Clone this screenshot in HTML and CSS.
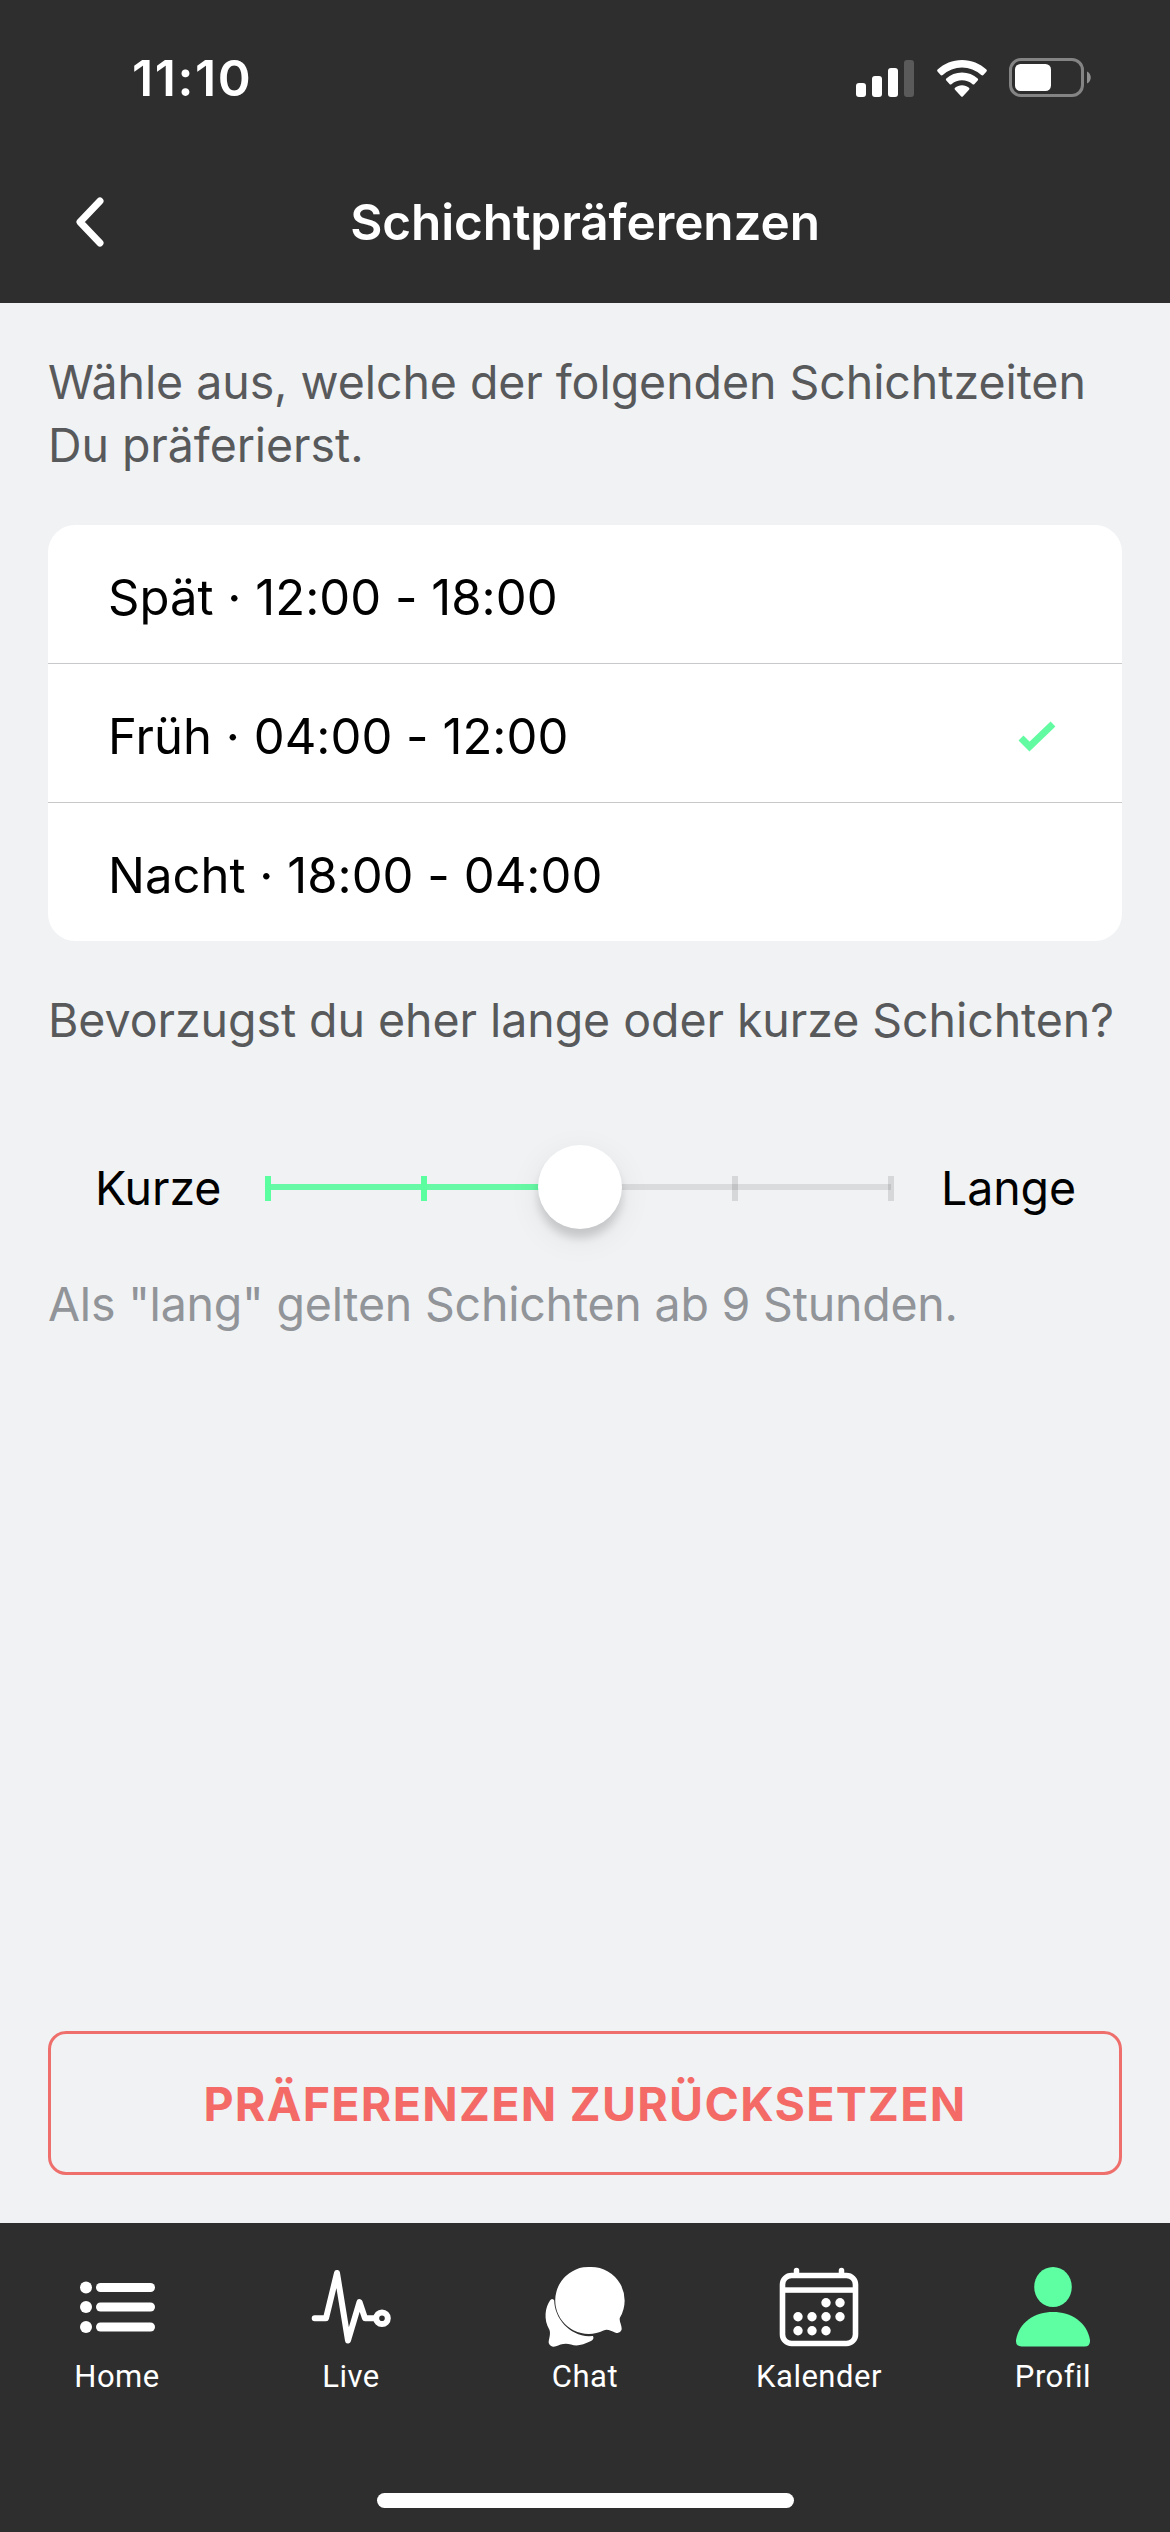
FILE: index.html
```html
<!DOCTYPE html>
<html lang="de">

<head>
     <meta charset="UTF-8">
     <meta name="viewport" content="width=device-width, initial-scale=1.0">
     <title>Schichtpräferenzen</title>
     <link rel="stylesheet" href="styles.css">
</head>

<body>
     <div class="screen">
          <div class="statusbar">
               <span class="time">11:10</span>
               <div class="status-icons">
                    <svg width="58" height="37" viewBox="0 0 58 37" fill="#fff">
                         <rect x="0" y="23" width="10" height="14" rx="3" />
                         <rect x="16" y="16" width="10" height="21" rx="3" />
                         <rect x="32" y="8" width="10" height="29" rx="3" />
                         <rect x="48" y="0" width="10" height="37" rx="3" fill="#5a5a5a" />
                    </svg>
                    <svg class="wifi" width="50" height="37" viewBox="0 0 50 37" fill="#fff">
                         <path d="M25 0C34.5 0 43 3.7 49.4 9.6Q50.4 10.6 49.5 11.6L46.6 14.8Q45.5 15.9 44.3 14.9A29 29 0 0 0 5.7 14.9Q4.5 15.9 3.4 14.8L.5 11.6Q-.4 10.6 .6 9.6C7 3.7 15.5 0 25 0Z" />
                         <path d="M25 12.5C31 12.5 36.5 14.7 40.7 18.4Q41.7 19.4 40.7 20.4L37.5 23.9Q36.5 24.9 35.3 23.9A16.5 16.5 0 0 0 14.7 23.9Q13.5 24.9 12.5 23.9L9.3 20.4Q8.3 19.4 9.3 18.4C13.5 14.7 19 12.5 25 12.5Z" />
                         <path d="M25 25.3C27.7 25.3 30 26.2 32 27.7Q33 28.7 32 29.7L26 36.2Q25 37.2 24 36.2L18 29.7Q17 28.7 18 27.7C20 26.2 22.3 25.3 25 25.3Z" />
                    </svg>
                    <svg class="battery" width="83" height="40" viewBox="0 0 83 40">
                         <rect x="1.5" y="1.5" width="72" height="36" rx="10.5" fill="none" stroke="#848484" stroke-width="3" />
                         <rect x="6" y="6" width="36" height="27" rx="5.5" fill="#fff" />
                         <path d="M78 13.5C83 15.5 83 23.5 78 25.5Z" fill="#909090" />
                    </svg>
               </div>
          </div>

          <div class="header">
               <svg class="back" width="28" height="50" viewBox="0 0 28 50">
                    <path d="M24 4L4 25L24 46" fill="none" stroke="#fff" stroke-width="7" stroke-linecap="round" stroke-linejoin="round" />
               </svg>
               <h1>Schichtpräferenzen</h1>
          </div>

          <div class="content">
               <p class="intro">Wähle aus, welche der folgenden Schichtzeiten<br>Du präferierst.</p>

               <div class="card">
                    <div class="row">Spät · 12:00 - 18:00</div>
                    <div class="row">Früh · 04:00 - 12:00
                         <svg class="check" width="36" height="30" viewBox="0 0 36 30">
                              <path d="M2 17L10.5 25.5L34 3" fill="none" stroke="#62fba2" stroke-width="7" />
                         </svg>
                    </div>
                    <div class="row">Nacht · 18:00 - 04:00</div>
               </div>

               <p class="question">Bevorzugst du eher lange oder kurze Schichten?</p>

               <div class="slider">
                    <span>Kurze</span>
                    <div class="range">
                         <i class="tick on"></i>
                         <i class="tick on"></i>
                         <i class="tick"></i>
                         <i class="tick"></i>
                         <i class="tick"></i>
                         <div class="knob"></div>
                    </div>
                    <span class="end">Lange</span>
               </div>

               <p class="note">Als "lang" gelten Schichten ab 9 Stunden.</p>

               <button class="reset">PRÄFERENZEN ZURÜCKSETZEN</button>
          </div>

          <div class="tabbar">
               <div class="tab">
                    <svg width="84" height="84" viewBox="0 0 84 84" fill="#fff">
                         <circle cx="11" cy="24.5" r="6" />
                         <circle cx="11" cy="44" r="6" />
                         <circle cx="11" cy="64" r="6" />
                         <rect x="21" y="20" width="59" height="9" rx="4.5" />
                         <rect x="21" y="39.5" width="59" height="9" rx="4.5" />
                         <rect x="21" y="59.5" width="59" height="9" rx="4.5" />
                    </svg>
                    <span>Home</span>
               </div>
               <div class="tab">
                    <svg width="84" height="84" viewBox="0 0 84 84" fill="none" stroke="#fff" stroke-width="6" stroke-linecap="round" stroke-linejoin="round">
                         <path d="M5.7 55.3H17L28 10L39 77.5L50.5 39L56 55.3H66" />
                         <circle cx="73" cy="55.3" r="5.8" />
                    </svg>
                    <span>Live</span>
               </div>
               <div class="tab">
                    <svg width="84" height="84" viewBox="0 0 84 84" fill="#fff">
                         <path d="M48 4A33.5 33.5 0 0 1 77 54.5C75.5 58 79.5 63 78.5 67Q76.5 71.5 72 69.5C68 68 64.5 65.5 60.5 67.5A33.5 33.5 0 1 1 48 4Z" />
                         <path d="M10.5 36.5L11.2 37.5C11.5 55 26 72.5 46 73.3L50 73Q51.5 76 48 78C40 82 34 83.5 28 81.5C22 79.5 17 81.5 13 83.3Q8 85 5.7 80C5.5 76 8 72 6.5 67C0 56 2.500 44 7 37.500Q8.500 35 10.500 36.500Z" />
                    </svg>
                    <span>Chat</span>
               </div>
               <div class="tab">
                    <svg width="84" height="84" viewBox="0 0 84 84" fill="#fff">
                         <path d="M19.5 7.5V12M64.5 7.5V12" stroke="#fff" stroke-width="5.5" stroke-linecap="round" />
                         <rect x="5.5" y="12.5" width="73" height="68" rx="9" fill="none" stroke="#fff" stroke-width="5.6" />
                         <rect x="5" y="24.3" width="74" height="5.5" />
                         <circle cx="49" cy="39.7" r="4.7" />
                         <circle cx="63" cy="39.7" r="4.7" />
                         <circle cx="21" cy="53.7" r="4.7" />
                         <circle cx="35" cy="53.7" r="4.7" />
                         <circle cx="49" cy="53.7" r="4.7" />
                         <circle cx="63" cy="53.7" r="4.7" />
                         <circle cx="21" cy="67.7" r="4.7" />
                         <circle cx="35" cy="67.7" r="4.7" />
                         <circle cx="49" cy="67.7" r="4.7" />
                    </svg>
                    <span>Kalender</span>
               </div>
               <div class="tab">
                    <svg width="84" height="84" viewBox="0 0 84 84" fill="#5effa3">
                         <ellipse cx="42" cy="24" rx="18.8" ry="20" />
                         <path d="M42 49C60 49 76 59 79 77Q79.5 83.5 73.5 83.5H10.5Q4.5 83.5 5 77C8 59 24 49 42 49Z" />
                    </svg>
                    <span>Profil</span>
               </div>
          </div>
          <div class="home-indicator"></div>
     </div>
</body>

</html>
```

FILE: styles.css
```css
* {
     box-sizing: border-box;
     margin: 0;
     padding: 0;
}

body {
     font-family: Inter, "Liberation Sans", sans-serif;
     background: #2e2e2e;
}

svg {
     display: block;
     flex: none;
     overflow: visible;
}

.screen {
     width: 1170px;
     height: 2532px;
     display: flex;
     flex-direction: column;
     overflow: hidden;
}

/* top */
.statusbar {
     height: 141px;
     padding: 15px 78px 0 132px;
     display: flex;
     align-items: center;
     justify-content: space-between;
     color: #fff;
}

.time {
     font-size: 50px;
     font-weight: 600;
     letter-spacing: 1.6px;
}

.status-icons {
     display: flex;
     align-items: center;
}

.wifi {
     margin-left: 23px;
}

.battery {
     margin-left: 22px;
}

.header {
     height: 162px;
     padding: 0 76px;
     display: grid;
     grid-template-columns: 28px 1fr 28px;
     align-items: center;
     color: #fff;
     text-align: center;
}

.header h1 {
     font-size: 49.5px;
     font-weight: 600;
     letter-spacing: -0.1px;
}

/* content */
.content {
     flex: 1;
     padding: 48px;
     display: flex;
     flex-direction: column;
     background: #f0f2f4;
     font-size: 46.5px;
     line-height: 63px;
}

.intro,
.question {
     color: #58595b;
     letter-spacing: -0.06px;
     white-space: nowrap;
}

.card {
     margin: 48px 0;
     border-radius: 27px;
     background: #fff;
     overflow: hidden;
}

.row {
     height: 138px;
     padding: 6px 67px 0 60px;
     display: flex;
     align-items: center;
     justify-content: space-between;
     font-size: 49px;
     letter-spacing: 0.02px;
     color: #000;
}

.row + .row {
     height: 139px;
     border-top: 1px solid #c8c9cb;
}

.slider {
     height: 84px;
     margin-top: 93px;
     padding-left: 47px;
     display: grid;
     grid-template-columns: 170px 629px auto;
     align-items: center;
     color: #000;
     letter-spacing: -0.1px;
}

.slider span {
     padding-top: 2px;
}

.slider .end {
     padding-left: 47px;
}

.range {
     position: relative;
     height: 84px;
     display: flex;
     align-items: center;
     justify-content: space-between;
     background: linear-gradient(to right, #67f9a5 50%, #d9dbdd 50%) 3px 39px / 623px 6px no-repeat;
}

.tick {
     width: 6px;
     height: 25px;
     margin-top: 2px;
     background: rgba(0, 0, 0, 0.11);
}

.tick.on {
     background: #5cffa0;
}

.knob {
     position: absolute;
     left: 273px;
     top: 0;
     width: 84px;
     height: 84px;
     border-radius: 50%;
     background: #fff;
     box-shadow: 0 9px 8px rgba(0, 0, 0, 0.14), 0 9px 34px rgba(0, 0, 0, 0.07);
}

.note {
     margin-top: 44px;
     color: #919498;
     letter-spacing: -0.21px;
}

.reset {
     height: 144px;
     margin-top: auto;
     padding-top: 2px;
     border: 3px solid #ee6f6c;
     border-radius: 18px;
     background: none;
     color: #f36a67;
     font: 700 46.5px Inter, "Liberation Sans", sans-serif;
     letter-spacing: 1.3px;
}

/* bottom navigation */
.tabbar {
     height: 270px;
     padding-top: 40px;
     display: grid;
     grid-template-columns: repeat(5, 1fr);
}

.tab {
     display: flex;
     flex-direction: column;
     align-items: center;
     color: #fff;
     font: 31px/36px Roboto, "Liberation Sans", sans-serif;
     letter-spacing: 0.5px;
}

.tab span {
     margin-top: 12px;
}

.home-indicator {
     width: 417px;
     height: 15px;
     margin: 0 auto 24px;
     border-radius: 8px;
     background: #fff;
}
```
